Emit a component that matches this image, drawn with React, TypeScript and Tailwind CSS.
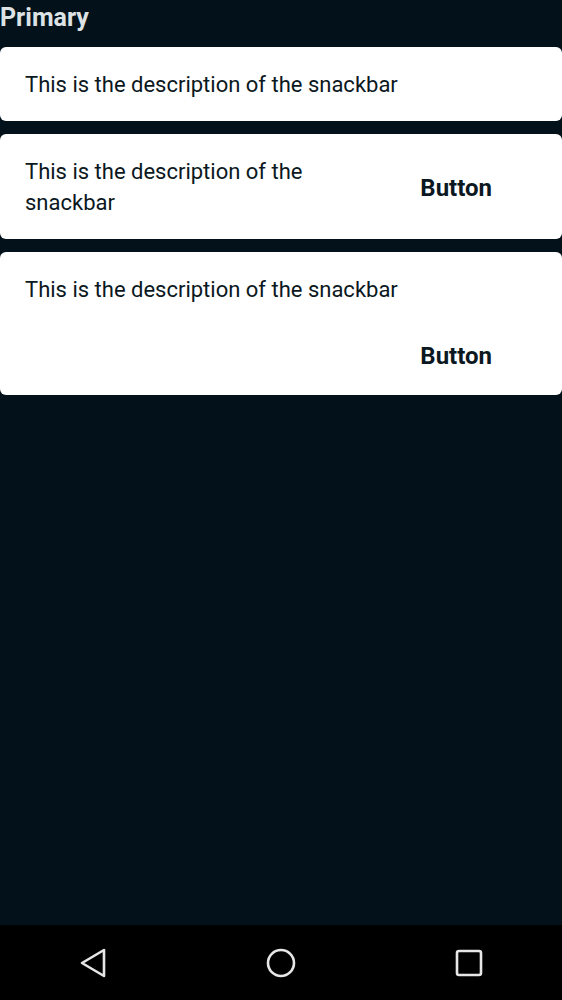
import React from "react";

type SnackbarProps = {
  text: string;
  action?: string;
  stacked?: boolean;
};

const Snackbar = ({ text, action, stacked = false }: SnackbarProps) => {
  if (stacked) {
    return (
      <div className="bg-white rounded-[6px] pl-[25px] pr-[54px] pt-[22px] pb-[15px]">
        <p className="text-[22px] leading-[31px] text-[#0b1821]">{text}</p>
        <div className="flex justify-end mt-[27px]">
          <button className="px-[16px] h-[48px] text-[24px] font-bold text-[#0b1821]">
            {action}
          </button>
        </div>
      </div>
    );
  }

  return (
    <div className="bg-white rounded-[6px] pl-[25px] pr-[54px] pt-[22px] pb-[21px] flex items-center">
      <p className="flex-1 min-w-0 text-[22px] leading-[31px] text-[#0b1821]">{text}</p>
      {action && (
        <button className="ml-[24px] px-[16px] h-[48px] mt-[2px] text-[24px] font-bold text-[#0b1821]">
          {action}
        </button>
      )}
    </div>
  );
};

const NavBar = () => (
  <div className="h-[75px] bg-black flex items-center justify-between px-[78px]">
    <svg width="30" height="30" viewBox="0 0 30 30">
      <path
        d="M26 2 L26 28 L4 15 Z"
        fill="none"
        stroke="#e6e6e6"
        strokeWidth="2.6"
        strokeLinejoin="round"
      />
    </svg>
    <svg width="30" height="30" viewBox="0 0 30 30">
      <circle cx="15" cy="15" r="13" fill="none" stroke="#e6e6e6" strokeWidth="2.6" />
    </svg>
    <svg width="30" height="30" viewBox="0 0 30 30">
      <rect x="3" y="3" width="24" height="24" rx="2" fill="none" stroke="#e6e6e6" strokeWidth="2.6" />
    </svg>
  </div>
);

export default function App() {
  const text = "This is the description of the snackbar";
  return (
    <div
      className="w-[562px] h-[1000px] bg-[#02111a] flex flex-col"
      style={{ fontFamily: "Roboto, 'Liberation Sans', sans-serif" }}
    >
      <div className="flex-1 flex flex-col">
        <h1 className="text-[25px] leading-[36px] font-bold text-[#dde2e5] mb-[11px]">Primary</h1>
        <div className="flex flex-col gap-[13px]">
          <Snackbar text={text} />
          <Snackbar text={text} action="Button" />
          <Snackbar text={text} action="Button" stacked />
        </div>
      </div>
      <NavBar />
    </div>
  );
}
